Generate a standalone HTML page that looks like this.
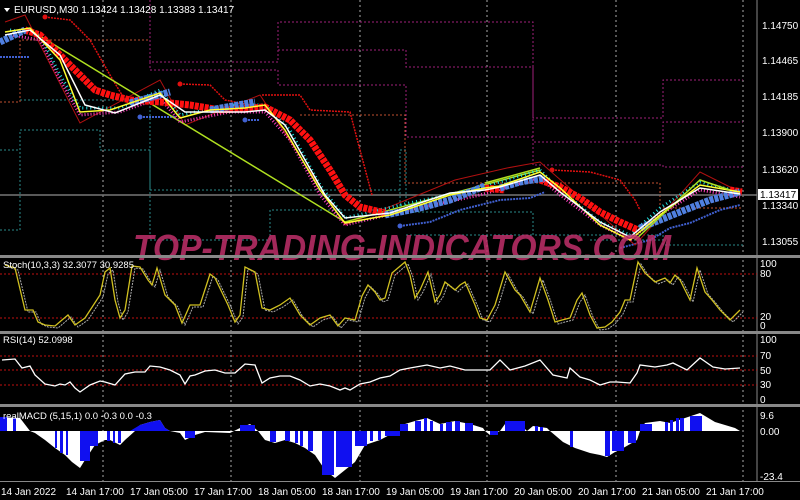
<!DOCTYPE html>
<html><head><meta charset="utf-8"><style>
html,body{margin:0;padding:0;background:#000;width:800px;height:500px;overflow:hidden}
svg{display:block}
text{font-family:"Liberation Sans",sans-serif;font-size:10px;fill:#fff}
</style></head><body>
<svg width="800" height="500" viewBox="0 0 800 500">
<rect width="800" height="500" fill="#000"/>
<g stroke="#aaa" stroke-dasharray="2,3" stroke-width="1">
<line x1="103" y1="0" x2="103" y2="482"/><line x1="231" y1="0" x2="231" y2="482"/>
<line x1="360" y1="0" x2="360" y2="482"/><line x1="487" y1="0" x2="487" y2="482"/>
<line x1="616" y1="0" x2="616" y2="482"/><line x1="743" y1="0" x2="743" y2="482"/>
</g>
<g fill="none" stroke-dasharray="2,2" stroke-width="1">
<path stroke="#a0207a" d="M150,0 150,62 278,62 278,22 533,22 533,118 663,118 663,80 743,80"/>
<path stroke="#a0207a" d="M278,50 406,50 406,67 533,67 533,142 663,142 663,122 743,122"/>
<path stroke="#a0207a" d="M150,62 150,70 278,70 278,85 406,85 406,137 533,137 533,165 663,165 663,167 743,167"/>
<path stroke="#2a8a8a" d="M0,230 20,230 20,130 100,130 100,150 150,150 150,240 270,240 270,210 400,210 400,150 406,150 406,212 533,212 533,235 663,235 663,245 743,245"/>
<path stroke="#2a8a8a" d="M20,100 150,100 150,190 400,190 M406,235 533,235 M590,240 663,240"/>
<path stroke="#2a8a8a" d="M0,150 20,150"/>
<path stroke="#c05030" d="M0,102 20,102 20,40 150,40 M300,115 405,115 405,183 660,183 660,208 743,208"/>
</g>
<line x1="0" y1="195" x2="757" y2="195" stroke="#777" stroke-width="1.5"/>
<path fill="none" stroke="#e01010" stroke-width="1.5" stroke-dasharray="2,1" d="M45,17 70,20 90,40 110,75 125,100 M180,84 210,85 225,100 250,105 M262,95 300,95 310,110 350,112 360,150 372,195 M552,170 590,172 620,180 635,200 640,210"/>
<circle cx="45" cy="17" r="2.5" fill="#e01010"/><circle cx="180" cy="84" r="2.5" fill="#e01010"/><circle cx="552" cy="170" r="2.5" fill="#e01010"/>
<path fill="none" stroke="#4060d0" stroke-width="2" stroke-dasharray="2,1" d="M0,57 30,57 M140,117 175,117 M245,120 260,120 M400,226 430,222 460,210 500,200 530,198 545,192 M620,248 650,240 670,228 690,223 720,210 740,205"/>
<circle cx="140" cy="117" r="2.5" fill="#4060d0"/><circle cx="245" cy="120" r="2.5" fill="#4060d0"/><circle cx="400" cy="226" r="2.5" fill="#4060d0"/>
<polyline fill="none" stroke="#b01010" stroke-width="1" points="5,22 25,15 80,123 160,80 185,125 260,95 345,225 455,180 507,168 540,162 635,245 700,172 740,192"/>
<polyline fill="none" stroke="#b0e020" stroke-width="1.5" points="30,30 345,222 540,170"/>
<polyline fill="none" stroke="#ff40c0" stroke-width="3" stroke-dasharray="1,2" points="10,35 40,40 60,80 80,115 120,112 160,98 180,122 230,112 265,112 290,140 320,195 345,225 400,212 480,195 540,178 560,195 600,225 630,240 660,215 700,190 740,197"/>
<polyline fill="none" stroke="#20e0e0" stroke-width="3" stroke-dasharray="1,3" points="10,30 40,35 60,75 80,108 120,108 160,90 180,115 230,105 265,105 290,130 320,185 345,218 400,205 480,188 540,170 560,190 600,222 630,235 660,208 700,182 740,192"/>
<path fill="none" stroke="#ff1010" stroke-width="7" stroke-dasharray="4,1" d="M25,30 40,35 60,55 80,75 95,90 110,95 130,100 160,102 190,105 220,110 250,108 265,107 290,120 310,140 330,170 345,195 360,207 385,213 M485,188 505,190 M540,180 560,187 580,198 600,212 620,222 638,230 M730,190 742,192"/>
<path fill="none" stroke="#5080e0" stroke-width="7" stroke-dasharray="4,1" d="M0,42 25,30 M130,103 170,92 M210,110 255,102 M385,215 420,208 450,200 485,186 M500,188 520,182 545,178 M640,228 680,212 710,200 740,192"/>
<polyline fill="none" stroke="#ffff30" stroke-width="1.5" points="5,32 30,28 60,60 80,112 110,110 160,93 180,118 210,110 245,108 265,105 285,130 320,190 345,223 390,215 450,195 485,188 500,186 540,172 560,188 600,225 630,240 660,215 700,185 740,192"/>
<path fill="none" stroke="#b0e020" stroke-width="1.5" d="M485,183 540,168 M635,240 700,180 730,190"/>
<polyline fill="none" stroke="#fff" stroke-width="1.5" points="5,35 30,30 60,55 85,105 115,113 160,95 185,112 210,112 245,112 265,110 285,125 325,195 345,218 390,213 450,193 485,190 500,187 540,175 560,192 600,222 630,237 660,212 700,188 740,194"/>
<text x="133" y="260" textLength="538" lengthAdjust="spacingAndGlyphs" style="font-size:36px;font-weight:bold;font-style:italic;fill:#c0306a;opacity:.85">TOP-TRADING-INDICATORS.COM</text>
<path d="M4,8 l6,0 l-3,4z" fill="#fff"/>
<text x="14" y="13">EURUSD,M30  1.13424 1.13428 1.13383 1.13417</text>
<g fill="#888"><rect x="0" y="255" width="800" height="3"/><rect x="0" y="331" width="800" height="3"/><rect x="0" y="404" width="800" height="3"/><rect x="0" y="481" width="800" height="1"/></g>
<line x1="757" y1="0" x2="757" y2="482" stroke="#888"/>
<g stroke="#c01010" stroke-dasharray="2,2"><line x1="0" y1="274" x2="757" y2="274"/><line x1="0" y1="318" x2="757" y2="318"/><line x1="0" y1="356" x2="757" y2="356"/><line x1="0" y1="370" x2="757" y2="370"/><line x1="0" y1="385" x2="757" y2="385"/></g>
<g transform="translate(3,2)"><polyline fill="none" stroke="#aaa" stroke-width="1" stroke-dasharray="2,1" points="5,265 15,268 25,310 33,310 38,322 45,325 55,326 62,320 68,315 75,325 85,318 100,295 105,272 110,268 115,300 120,318 125,310 132,266 140,267 148,280 152,285 157,268 165,295 175,305 182,323 190,305 200,305 210,274 215,278 228,305 235,322 240,315 245,267 255,272 262,308 270,310 280,305 290,298 300,315 310,325 320,318 330,315 338,326 345,318 355,320 362,296 368,285 375,292 380,300 385,298 392,273 405,262 410,275 415,298 420,290 428,272 435,302 440,295 445,282 455,290 460,285 465,282 475,305 480,318 487,320 495,305 505,272 515,290 520,295 530,312 540,278 548,300 555,322 562,320 570,318 577,300 582,293 590,315 597,328 605,327 612,322 620,312 625,300 630,300 638,262 645,273 655,282 665,278 670,283 675,275 680,280 690,300 697,268 705,292 712,300 720,310 730,320 740,310"/></g>
<polyline fill="none" stroke="#d0c020" stroke-width="1.3" points="5,265 15,268 25,310 33,310 38,322 45,325 55,326 62,320 68,315 75,325 85,318 100,295 105,272 110,268 115,300 120,318 125,310 132,266 140,267 148,280 152,285 157,268 165,295 175,305 182,323 190,305 200,305 210,274 215,278 228,305 235,322 240,315 245,267 255,272 262,308 270,310 280,305 290,298 300,315 310,325 320,318 330,315 338,326 345,318 355,320 362,296 368,285 375,292 380,300 385,298 392,273 405,262 410,275 415,298 420,290 428,272 435,302 440,295 445,282 455,290 460,285 465,282 475,305 480,318 487,320 495,305 505,272 515,290 520,295 530,312 540,278 548,300 555,322 562,320 570,318 577,300 582,293 590,315 597,328 605,327 612,322 620,312 625,300 630,300 638,262 645,273 655,282 665,278 670,283 675,275 680,280 690,300 697,268 705,292 712,300 720,310 730,320 740,310"/>
<polyline fill="none" stroke="#fff" stroke-width="1.3" points="2,360 15,359 22,368 30,366 35,375 45,384 55,386 60,384 65,385 70,382 75,388 80,392 90,385 100,381 105,382 115,385 125,374 135,372 145,372 150,366 160,367 170,370 180,375 185,384 190,376 195,375 205,371 215,370 225,373 235,373 245,364 255,365 262,383 270,378 280,376 290,376 300,380 310,386 320,384 330,386 340,390 345,388 350,390 360,384 370,382 380,378 390,376 400,370 410,368 427,365 440,368 450,366 465,370 480,370 490,370 500,360 510,370 525,366 540,360 553,375 567,378 570,368 580,377 590,380 600,385 610,382 617,382 630,383 637,373 640,365 655,367 667,365 673,363 687,370 700,358 713,367 725,369 740,368"/>
<path fill="#fff" d="M0,431 L0,417 20,418 30,431 35,433 45,440 55,448 65,455 72,462 80,468 85,460 95,445 105,440 110,440 120,445 125,440 135,431 140,425 150,422 160,420 165,428 170,431 180,433 185,440 195,435 205,432 230,433 240,428 250,424 258,431 265,440 275,443 285,440 295,443 305,448 315,455 325,470 335,478 345,470 355,462 365,445 380,440 395,432 400,431 405,424 415,421 427,418 440,424 455,421 470,424 483,428 485,431 490,435 500,431 505,424 510,421 520,424 527,431 533,426 547,428 550,431 563,442 575,448 590,453 600,455 607,457 615,452 625,447 637,440 640,431 645,423 660,421 670,423 685,418 700,413 715,422 735,428 740,431 Z"/>
<g fill="#1010f0">
<rect x="0" y="417" width="7" height="14"/><rect x="13" y="418" width="3" height="13"/>
<rect x="55" y="431" width="2" height="17"/><rect x="60" y="431" width="3" height="22"/><rect x="66" y="431" width="2" height="24"/>
<rect x="80" y="431" width="10" height="30"/><rect x="90" y="431" width="8" height="15"/>
<rect x="107" y="431" width="3" height="10"/><rect x="113" y="431" width="2" height="12"/><rect x="118" y="431" width="3" height="12"/>
<path d="M130,431 L140,425 150,422 160,420 165,428 170,431Z"/>
<rect x="185" y="431" width="10" height="7"/><rect x="240" y="425" width="15" height="6"/>
<rect x="270" y="431" width="6" height="11"/><rect x="285" y="431" width="5" height="10"/><rect x="295" y="431" width="3" height="12"/>
<rect x="300" y="431" width="3" height="15"/><rect x="308" y="431" width="5" height="20"/><rect x="322" y="431" width="12" height="44"/><rect x="336" y="431" width="16" height="36"/>
<rect x="355" y="431" width="12" height="15"/><rect x="370" y="431" width="3" height="10"/><rect x="378" y="431" width="3" height="9"/><rect x="385" y="431" width="15" height="5"/>
<rect x="400" y="424" width="8" height="7"/><rect x="415" y="421" width="6" height="10"/><rect x="424" y="418" width="3" height="13"/><rect x="430" y="421" width="3" height="10"/><rect x="440" y="424" width="3" height="7"/><rect x="446" y="422" width="6" height="9"/><rect x="455" y="421" width="5" height="10"/><rect x="465" y="423" width="8" height="8"/>
<rect x="490" y="431" width="8" height="4"/><rect x="505" y="421" width="20" height="10"/><rect x="535" y="426" width="3" height="5"/><rect x="540" y="427" width="3" height="4"/>
<rect x="570" y="431" width="3" height="16"/><rect x="605" y="431" width="5" height="25"/><rect x="612" y="431" width="12" height="20"/><rect x="628" y="431" width="8" height="12"/>
<rect x="640" y="424" width="12" height="7"/><rect x="665" y="422" width="3" height="9"/><rect x="670" y="420" width="3" height="11"/><rect x="676" y="418" width="3" height="13"/><rect x="680" y="418" width="4" height="13"/><rect x="690" y="416" width="12" height="15"/>
</g>
<g style="font-size:9.5px">
<text x="762" y="29">1.14750</text><text x="762" y="64">1.14465</text><text x="762" y="100">1.14185</text>
<text x="762" y="136">1.13900</text><text x="762" y="173">1.13620</text><text x="762" y="209">1.13340</text><text x="762" y="245">1.13055</text>
<rect x="758" y="189" width="40" height="11" fill="#fff"/><text x="760" y="198" style="fill:#000">1.13417</text>
<text x="760" y="267">100</text><text x="760" y="277">80</text><text x="760" y="320">20</text><text x="760" y="329">0</text>
<text x="760" y="343">100</text><text x="760" y="359">70</text><text x="760" y="374">50</text><text x="760" y="388">30</text><text x="760" y="403">0</text>
<text x="760" y="419">9.6</text><text x="760" y="435">0.00</text><text x="760" y="480">-23.4</text>
</g>
<text x="3" y="268" style="font-size:9.5px">Stoch(10,3,3) 32.3077 30.9285</text>
<text x="3" y="343" style="font-size:9.5px">RSI(14) 52.0998</text>
<text x="3" y="419" style="font-size:9.5px">realMACD (5,15,1) 0.0 -0.3 0.0 -0.3</text>
<g style="font-size:9.5px">
<text x="1" y="495">14 Jan 2022</text><text x="66" y="495">14 Jan 17:00</text><text x="130" y="495">17 Jan 05:00</text>
<text x="194" y="495">17 Jan 17:00</text><text x="258" y="495">18 Jan 05:00</text><text x="322" y="495">18 Jan 17:00</text>
<text x="386" y="495">19 Jan 05:00</text><text x="450" y="495">19 Jan 17:00</text><text x="514" y="495">20 Jan 05:00</text>
<text x="578" y="495">20 Jan 17:00</text><text x="642" y="495">21 Jan 05:00</text><text x="706" y="495">21 Jan 17:00</text>
</g>
</svg>
</body></html>
